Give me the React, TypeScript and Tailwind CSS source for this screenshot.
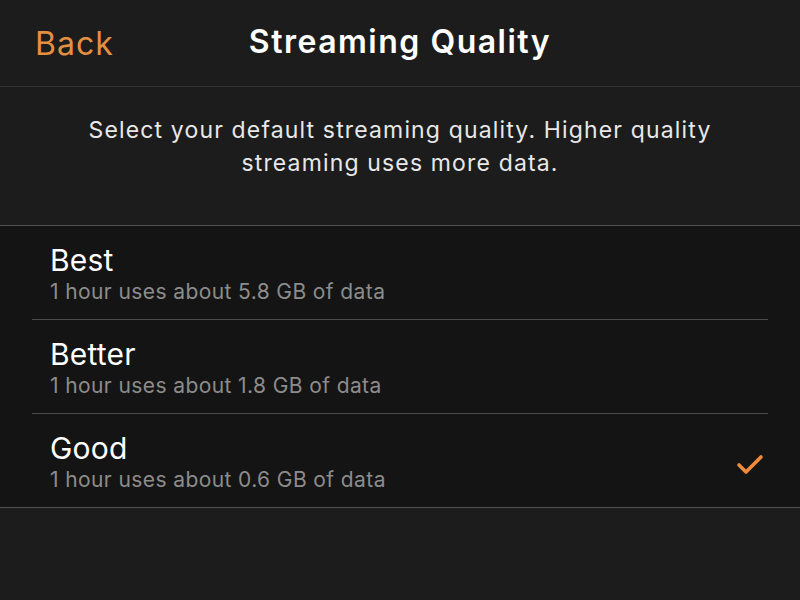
const ROWS = [
  { title: "Best", desc: "1 hour uses about 5.8 GB of data", checked: false },
  { title: "Better", desc: "1 hour uses about 1.8 GB of data", checked: false },
  { title: "Good", desc: "1 hour uses about 0.6 GB of data", checked: true },
];

export default function App() {
  return (
    <div className="w-[800px] h-[600px] bg-[#1c1c1c] overflow-hidden font-['Inter',sans-serif]">
      {/* Nav bar */}
      <div className="relative h-[87px] border-b border-[#333] flex items-center justify-center">
        <span className="absolute left-[35px] top-[20px] text-[32px] text-[#e58f43] tracking-[1px]">Back</span>
        <h1 className="text-[32px] font-semibold text-white tracking-[1.5px] mb-[2px]">Streaming Quality</h1>
      </div>

      {/* Description */}
      <div className="h-[138px] pt-[27px] px-4 text-center text-[23px] leading-[33px] text-[#e8e8e8] tracking-[1.15px]">
        Select your default streaming quality. Higher quality
        <br />
        streaming uses more data.
      </div>

      {/* Options */}
      <div className="bg-[#141414] border-t border-b border-[#505050]">
        {ROWS.map((row, i) => (
          <div key={row.title} className={i < ROWS.length - 1 ? "ml-8 mr-8 border-b border-[#4a4a4a]" : "ml-8"}>
            <div className="h-[93px] flex items-start pt-[17px] pl-[18px] pr-[36px]">
              <div className="flex-1">
                <div className="text-[30px] leading-[34px] text-white tracking-[0.2px]">{row.title}</div>
                <div className="text-[21px] leading-[30px] text-[#8c8c8c] tracking-[0.4px]">{row.desc}</div>
              </div>
              {row.checked && (
                <svg width="28" height="22" viewBox="0 0 28 22" fill="none" className="mt-[22px]">
                  <path d="M3 12 L10 19 L25 4" stroke="#f0893a" strokeWidth="3.6" strokeLinecap="round" strokeLinejoin="round" />
                </svg>
              )}
            </div>
          </div>
        ))}
      </div>
    </div>
  );
}
